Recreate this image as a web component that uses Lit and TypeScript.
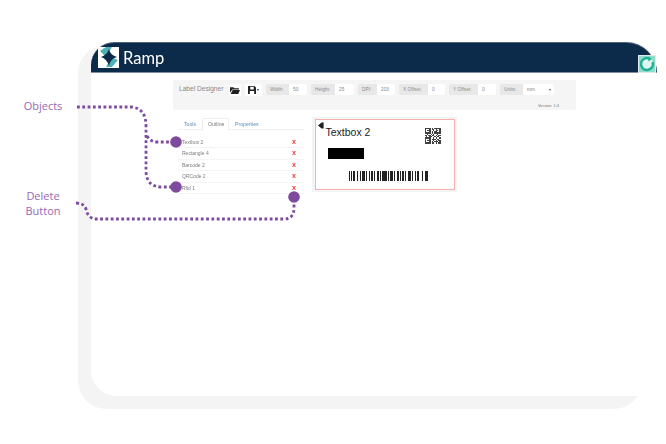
import { LitElement, html, css, svg } from "lit";
import { customElement } from "lit/decorators.js";

const fields = [
  { label: "Width:", value: "50", lw: 23, vw: 18 },
  { label: "Height:", value: "25", lw: 24, vw: 19 },
  { label: "DPI:", value: "203", lw: 19, vw: 18 },
  { label: "X Offset:", value: "0", lw: 29, vw: 17 },
  { label: "Y Offset:", value: "0", lw: 29, vw: 18 },
];
const objects = ["Textbox 2", "Rectangle 4", "Barcode 2", "QRCode 2", "Rfid 1"];
const barcode = [2,1,1,1,2,2,1,2,1,1,3,1,1,2,1,1,2,1,1,2,2,1,1,1,3,1,2,1,1,1,3,1,1,2,2,1,1,1,2,1,1,2,3,1,1,2,1,1,2,2,1,1,1,2,3,1];
const qr = [
  "1111101011111","1000101101001","1011100101101","1000101011001","1111101011111",
  "0010010100100","1101101101011","0100110010110","1111100101001","1000101110110",
  "1011100101011","1000101011101","1111101101011",
];

@customElement("app-root")
export class AppRoot extends LitElement {
  static styles = css`
    :host { display: block; position: relative; width: 666px; height: 444px; overflow: hidden; background: #fff; font-family: "Liberation Sans", Arial, sans-serif; }
    .frame { width: 564px; height: 364px; margin: 45px 0 0 78px; padding: 0 0 13px 13px; box-sizing: border-box; background: #f4f4f4; border-radius: 28px; display: flex; position: absolute; }
    .panel { flex: none; width: 575px; height: 354px; margin-top: -3px; background: #fff; border-radius: 24px 0 0 26px; }
    .header { width: 566px; height: 31px; box-sizing: border-box; background: #0c2a4a; border-top: 1px solid #50657c; border-bottom: 1px solid #7f8fa1; border-radius: 24px 32px 0 0; display: flex; align-items: center; justify-content: space-between; position: relative; }
    .brand { display: flex; align-items: center; gap: 4px; margin-left: 7px; color: #fff; font: 400 16.5px Lato, sans-serif; filter: blur(0.3px); }
    .brand svg { display: block; }
    .refresh { align-self: flex-end; margin: 0 1px -1px 0; display: block; filter: blur(0.3px); }
    .toolbar { width: 403px; height: 30px; margin: 7px 0 0 82px; padding: 4px 0 0 6px; box-sizing: border-box; background: #f5f5f5; border-radius: 2px; position: relative; display: flex; align-items: flex-start; }
    .title { font-size: 6.6px; line-height: 10px; color: #8a8a8a; width: 50px; flex: none; }
    .btn { height: 12px; background: #fff; border: 0; border-radius: 2px; display: flex; align-items: center; justify-content: center; box-sizing: border-box; flex: none; }
    .open { width: 12px; margin-right: 4px; }
    .save { width: 17px; margin-right: 4px; gap: 1px; }
    .caret { width: 0; height: 0; border: 1.5px solid transparent; border-top: 2px solid #333; border-bottom: 0; }
    .group { display: flex; height: 11px; margin-right: 4px; flex: none; font-size: 4.8px; line-height: 11px; }
    .group span { display: block; box-sizing: border-box; padding-left: 4px; }
    .label { background: #e8e8e8; color: #8b8b8b; border-radius: 2px 0 0 2px; }
    .value { background: #fff; color: #888; border-radius: 0 2px 2px 0; }
    .group .select { display: flex; justify-content: space-between; align-items: center; padding-right: 3px; }
    .select i { display: block; width: 0; height: 0; border: 1.7px solid transparent; border-top: 2px solid #555; border-bottom: 0; }
    .version { position: absolute; right: 17px; bottom: 2px; font-size: 4px; line-height: 5px; color: #777; }
    .row { display: flex; margin: 4px 0 0 87px; gap: 8px; align-items: flex-start; }
    .left { width: 126px; flex: none; }
    .tabs { display: flex; height: 16px; padding-top: 4px; border-bottom: 1px solid #f1f1f1; box-sizing: border-box; font-size: 5.2px; line-height: 12px; color: #5d8fc0; }
    .tab { padding-left: 6px; }
    .tools { width: 24px; box-sizing: border-box; }
    .outline { width: 27px; box-sizing: border-box; color: #777; background: #fff; border: 1px solid #efefef; border-bottom-color: #fff; padding-left: 5px; height: 13px; line-height: 11px; border-radius: 2px 2px 0 0; }
    .list { margin-top: 6.5px; }
    .item { height: 11.5px; box-sizing: border-box; padding: 0 8px 0 4px; border-bottom: 1px solid #f4f4f4; display: flex; justify-content: space-between; align-items: center; font-size: 5px; color: #7d7d7d; }
    .x { color: #f03a3a; font-weight: 700; font-size: 7px; line-height: 8px; }
    .card { margin-top: 3px; width: 145px; height: 75px; padding: 2px 2px 2px 3px; box-sizing: border-box; background: #f4f4f4; flex: none; }
    .label-face { position: relative; width: 140px; height: 71px; box-sizing: border-box; border: 1.5px solid #f7b0b0; background: #fff; padding: 5.5px 0 0 9.5px; display: grid; grid-template-columns: 99px 16px; grid-template-rows: 16px 17px 22px; }
    .name { font-size: 10.5px; line-height: 12px; color: #222; }
    .arrow { position: absolute; left: 1.5px; top: 1.5px; display: block; }
    .qr { width: 16px; height: 16px; display: grid; grid-template-columns: repeat(13, 1fr); grid-template-rows: repeat(13, 1fr); margin-top: 2px; filter: blur(0.4px); opacity: 0.85; }
    .qr b { background: #222; }
    .qr u { background: #fff; }
    .rect { grid-column: 1 / 3; width: 36px; height: 11px; margin: 6px 0 0 2px; background: #000; }
    .bars { grid-column: 1 / 3; margin: 12px 0 0 23px; height: 10px; width: 81px; display: flex; }
    .bars i { display: block; height: 100%; min-width: 0; }
    .obj { position: absolute; color: #9868b4; font: 400 11px/15px "Open Sans", Lato, sans-serif; text-align: center; }
    .obj-objects { left: 18px; top: 98px; width: 50px; }
    .obj-delete { left: 18px; top: 188px; width: 50px; }
    .overlay { position: absolute; left: 0; top: 0; pointer-events: none; }
    .dots { fill: none; stroke: #7d4a9e; stroke-width: 2.8; stroke-dasharray: 2.8 2.5; }
    .ui { filter: blur(0.5px); }
  `;

  render() {
    const bars = barcode.map((w, i) => html`<i style="flex:${w} 0 0;background:${i % 2 ? "#fff" : "#222"}"></i>`);
    return html`
      <div class="frame">
        <div class="panel">
          <div class="header">
            <div class="brand">
              <svg width="21" height="21" viewBox="0 0 21 21">
                <rect width="21" height="21" fill="#fff"/>
                <path d="M2 4 L8 0 H14 Q11 6 7 9 Z" fill="#4fb3b5"/>
                <path d="M20 13 L14 20 H8 Q11 14 15 11 Z" fill="#4fb3b5"/>
                <path d="M11 2 Q12 8 19 10 Q12 12 11 19 Q9 12 3 10 Q9 8 11 2 Z" fill="#0c2a4a"/>
              </svg>
              <span>Ramp</span>
            </div>
            <svg class="refresh" width="18" height="18" viewBox="0 0 18 18">
              <rect width="18" height="18" fill="#8fdccb"/>
              <rect x="0.5" y="0.5" width="17" height="17" fill="none" stroke="#dfe9e8"/>
              <circle cx="9" cy="9" r="6.2" fill="#dff5ef"/>
              <path d="M11.5 3.6 A6 6 0 1 0 14.6 7" fill="none" stroke="#1fb096" stroke-width="2.4"/>
              <path d="M10 1.8 L14 3.8 L10.6 6.4 Z" fill="#1fb096"/>
            </svg>
          </div>
          <div class="ui">
            <div class="toolbar">
              <div class="title">Label Designer</div>
              <div class="btn open">
                <svg width="10" height="8" viewBox="0 0 9 7"><path d="M0 1 H3 L4 2 H8 V3 H2 L0 6 Z M2.4 3.6 H9 L7.4 7 H0.6 Z" fill="#222"/></svg>
              </div>
              <div class="btn save">
                <svg width="8" height="8" viewBox="0 0 7 7"><path d="M0 0 H5.6 L7 1.4 V7 H0 Z M2 0.6 V3 H5 V0.6 Z M1.6 4.4 V7 H5.4 V4.4 Z" fill="#222" fill-rule="evenodd"/></svg>
                <i class="caret"></i>
              </div>
              ${fields.map(f => html`<div class="group"><span class="label" style="width:${f.lw}px">${f.label}</span><span class="value" style="width:${f.vw}px">${f.value}</span></div>`)}
              <div class="group"><span class="label" style="width:23px">Units:</span><span class="value select" style="width:31px">mm<i></i></span></div>
              <div class="version">Version: 1.4</div>
            </div>
            <div class="row">
              <div class="left">
                <div class="tabs">
                  <div class="tab tools">Tools</div>
                  <div class="tab outline">Outline</div>
                  <div class="tab">Properties</div>
                </div>
                <div class="list">
                  ${objects.map(o => html`<div class="item"><span>${o}</span><span class="x">x</span></div>`)}
                </div>
              </div>
              <div class="card">
                <div class="label-face">
                  <svg class="arrow" width="6" height="7" viewBox="0 0 6 7"><path d="M0 3.5 L3.5 0.5 H5.6 V6.5 H3.5 Z" fill="#222"/></svg>
                  <div class="name">Textbox 2</div>
                  <div class="qr">${qr.join("").split("").map(c => c === "1" ? html`<b></b>` : html`<u></u>`)}</div>
                  <div class="rect"></div>
                  <div class="bars">${bars}</div>
                </div>
              </div>
            </div>
          </div>
        </div>
      </div>
      <div class="obj obj-objects">Objects</div>
      <div class="obj obj-delete">Delete<br />Button</div>
      <svg class="overlay" width="666" height="444" viewBox="0 0 666 444">
        ${svg`
          <path class="dots" d="M77 107 H131 Q146 108 146 126 V172 Q147 187 162 187 H176"/>
          <path class="dots" d="M147 136 Q150 142 158 142 H176"/>
          <path class="dots" d="M76 203 Q84 203 86 209 Q88 219 97 219 H284 Q294 219 294 208 V197"/>
          <circle cx="176" cy="142" r="5.8" fill="#7d4a9e"/>
          <circle cx="176" cy="187" r="5.8" fill="#7d4a9e"/>
          <circle cx="294" cy="197" r="5.8" fill="#7d4a9e"/>
        `}
      </svg>
    `;
  }
}
